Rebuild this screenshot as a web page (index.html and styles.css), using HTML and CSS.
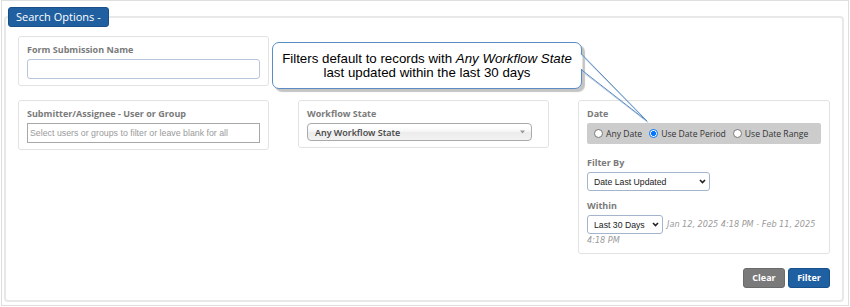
FILE: index.html
```html
<!DOCTYPE html>
<html>
<head>
<meta charset="utf-8">
<link rel="stylesheet" href="styles.css">
</head>
<body>
<div class="frame">
  <fieldset class="options">
    <legend class="legend">Search Options -</legend>
    <div class="content">
      <div class="grid">
        <div class="box box-name">
          <div class="label">Form Submission Name</div>
          <div class="text-input"></div>
        </div>
        <div class="box box-row2">
          <div class="label">Submitter/Assignee - User or Group</div>
          <div class="text-input square">Select users or groups to filter or leave blank for all</div>
        </div>
        <div class="box box-row2">
          <div class="label">Workflow State</div>
          <div class="chosen"><span>Any Workflow State</span><svg class="tri" width="5" height="4" viewBox="0 0 5 4"><path d="M0 0.5 L5 0.5 L2.5 3.5 Z" fill="#999"/></svg></div>
        </div>
        <div class="box box-row2 box-date">
          <div class="label">Date</div>
          <div class="radio-bar">
            <span class="radio"><span class="dot"></span>Any Date</span>
            <span class="radio"><span class="dot on"></span>Use Date Period</span>
            <span class="radio"><span class="dot"></span>Use Date Range</span>
          </div>
          <div class="label filter-by">Filter By</div>
          <div class="fselect block w-filter"><span>Date Last Updated</span><svg class="chev" width="7" height="5" viewBox="0 0 7 5"><path d="M1 1 L3.5 3.6 L6 1" fill="none" stroke="#222" stroke-width="1.6"/></svg></div>
          <div class="label within">Within</div>
          <div class="within-row"><div class="fselect w-within"><span>Last 30 Days</span><svg class="chev" width="7" height="5" viewBox="0 0 7 5"><path d="M1 1 L3.5 3.6 L6 1" fill="none" stroke="#222" stroke-width="1.6"/></svg></div><span class="range">Jan 12, 2025 4:18 PM - Feb 11, 2025 4:18 PM</span></div>
        </div>
      </div>
      <div class="actions">
        <span class="btn btn-clear">Clear</span>
        <span class="btn btn-filter">Filter</span>
      </div>
      <div class="callout">
        <div>Filters default to records with <i>Any Workflow State</i></div>
        <div>last updated within the last 30 days</div>
      </div>
      <svg class="pointer" width="836" height="274" viewBox="0 0 836 274">
        <line x1="575.5" y1="27.5" x2="575.5" y2="42" stroke="#fff" stroke-width="2"/>
        <polyline points="576,28.5 642,95.5 576,44.5" fill="none" stroke="#b9cde3" stroke-width="1"/>
        <polyline points="575,26.5 641,94 575,42.5" fill="none" stroke="#5a8cc3" stroke-width="1"/>
      </svg>
    </div>
  </fieldset>
</div>
</body>
</html>
```
FILE: styles.css
```css
body {
  margin: 0;
  background: #fff;
  font-family: "Open Sans", sans-serif;
}

.frame {
  box-sizing: border-box;
  width: 848px;
  height: 306px;
  margin-left: 1px;
  border: 1px solid #dedede;
  padding: 6px 0 0 2px;
}

.options {
  box-sizing: border-box;
  width: 840px;
  margin: 0;
  padding: 0;
  border: 2px solid #e8e8e8;
  border-radius: 4px;
  position: relative;
}

.legend {
  box-sizing: border-box;
  margin-left: 2px;
  padding: 0 7px;
  height: 20px;
  line-height: 18px;
  border: 1px solid #1a5089;
  border-radius: 3px;
  background: #2160a0;
  color: #fff;
  font-size: 11px;
}

.content {
  position: relative;
  padding: 9px 12px 12px;
}

.grid {
  display: grid;
  grid-template-columns: 251px 251px 252px;
  column-gap: 29px;
  row-gap: 14px;
  align-items: start;
}

.box {
  border: 1px solid #e2e2e2;
  border-radius: 3px;
  padding: 7px 8px 6px;
  background: #fff;
}

.box-name {
  grid-column: 1;
  grid-row: 1;
}

.box-row2 {
  grid-row: 2;
}

.label {
  font-size: 9px;
  font-weight: 700;
  line-height: 11px;
  color: #7a7a7a;
  margin-bottom: 4px;
}

.text-input {
  box-sizing: border-box;
  height: 20px;
  border: 1px solid #b8c6da;
  border-radius: 3px;
}

.text-input.square {
  border-color: #a8a8a8;
  border-radius: 0;
  padding-left: 2px;
  font: 8.8px/18px "Liberation Sans", Arial, sans-serif;
  color: #9a9a9a;
  white-space: nowrap;
}

.chosen {
  box-sizing: border-box;
  width: 225px;
  height: 18px;
  border: 1px solid #aaa;
  border-radius: 4px;
  background: linear-gradient(#ffffff 20%, #f4f4f4 50%, #ececec 52%, #f2f2f2);
  padding: 0 6px 0 7px;
  display: flex;
  align-items: center;
  justify-content: space-between;
  font-size: 9px;
  font-weight: 600;
  color: #444;
}

.radio-bar {
  box-sizing: border-box;
  height: 21px;
  background: #cccccc;
  border-radius: 2px;
  display: flex;
  align-items: center;
  padding-left: 7px;
  font-size: 8.6px;
  color: #333;
}

.radio {
  display: flex;
  align-items: center;
  margin-right: 7px;
}

.dot {
  box-sizing: border-box;
  width: 9px;
  height: 9px;
  border-radius: 50%;
  border: 1px solid #767676;
  background: #fff;
  margin-right: 3px;
}

.dot.on {
  border-color: #0075ff;
  background: radial-gradient(circle, #0075ff 0 2.2px, #fff 2.7px);
}

.filter-by {
  margin-top: 13px;
}

.within {
  margin-top: 9px;
}

.fselect {
  box-sizing: border-box;
  height: 19px;
  border: 1px solid #a4b4cc;
  border-radius: 3px;
  display: inline-flex;
  align-items: center;
  justify-content: space-between;
  padding: 0 3px 0 6px;
  font: 8.7px "Liberation Sans", Arial, sans-serif;
  color: #222;
  background: #fff;
  vertical-align: middle;
}

.fselect.block {
  display: flex;
}

.w-filter {
  width: 123px;
}

.w-within {
  width: 76px;
}

.within-row {
  line-height: 12px;
  font-size: 8px;
}

.range {
  margin-left: 4px;
  font: italic 8.15px/13px "DejaVu Sans", Verdana, sans-serif;
  color: #9a9a9a;
  vertical-align: middle;
}

.actions {
  display: flex;
  justify-content: flex-end;
  gap: 3px;
  margin-top: 14px;
}

.btn {
  box-sizing: border-box;
  width: 42px;
  height: 20px;
  border-radius: 3px;
  font-size: 9px;
  font-weight: 700;
  line-height: 18px;
  text-align: center;
  color: #fff;
}

.btn-clear {
  background: #7a7a7a;
  border: 1px solid #6b6b6b;
}

.btn-filter {
  background: #1f60a3;
  border: 1px solid #18508b;
}

.callout {
  position: absolute;
  left: 266px;
  top: 15px;
  box-sizing: border-box;
  width: 310px;
  height: 47px;
  border: 1px solid #5b8dc4;
  border-radius: 7px;
  background: #fff;
  box-shadow: 3px 3px 1px #c4c4c4;
  display: flex;
  flex-direction: column;
  justify-content: center;
  align-items: center;
  font: 13.3px/14px "Liberation Sans", Arial, sans-serif;
  color: #000;
}

.pointer {
  position: absolute;
  left: 0;
  top: 0;
  pointer-events: none;
}
```
